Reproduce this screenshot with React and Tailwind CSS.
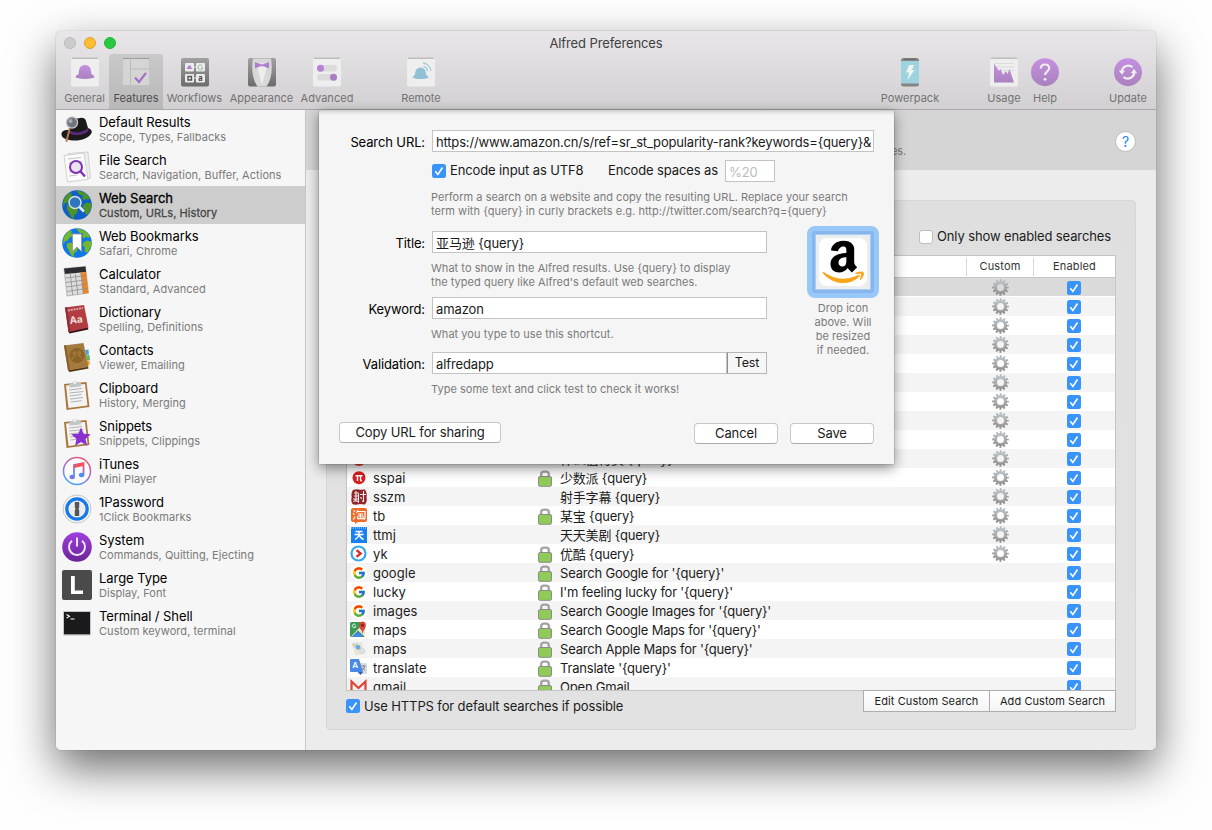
import React from "react";
import { FcGoogle } from "react-icons/fc";

const SERIES = 'font-["Inter","Noto_Sans_CJK_SC",sans-serif] tracking-[-0.12px]';

function Tile({ children }) {
  return (
    <svg width="30" height="30" viewBox="0 0 30 30">
      <rect x="1" y="1" width="28" height="28.5" rx="2" fill="#efeeef" />
      <path d="M2 1.2h26" stroke="#a9a8a9" strokeWidth="1" />
      {children}
    </svg>
  );
}

const hat = "M5.5 20.5C5.5 18.3 8 17.6 8.6 17C9 11.5 10 8 15 8S21 11.5 21.4 17C22 17.6 24.5 18.3 24.5 20.5C20 22.4 10 22.4 5.5 20.5Z";

const toolIcons = {
  General: (
    <Tile>
      <defs>
        <linearGradient id="pl" x1="0" y1="0" x2="0" y2="1">
          <stop offset="0" stopColor="#c58fe2" />
          <stop offset="1" stopColor="#a982bd" />
        </linearGradient>
      </defs>
      <path d={hat} fill="url(#pl)" />
    </Tile>
  ),
  Features: (
    <svg width="30" height="30" viewBox="0 0 30 30">
      <rect x="1.5" y="1.5" width="27" height="27" rx="2" fill="#d6d5d6" stroke="#c3c2c3" />
      <path d="M2 1.5h26" stroke="#9d9d9d" />
      <path d="M9.5 2v26M9.5 12H28" stroke="#bcbbbc" />
      <path d="M14 20.5l4 4.5l7-9" fill="none" stroke="#a374c4" strokeWidth="2.2" />
    </svg>
  ),
  Workflows: (
    <svg width="30" height="30" viewBox="0 0 30 30">
      <defs>
        <linearGradient id="wf" x1="0" y1="0" x2="0" y2="1">
          <stop offset="0" stopColor="#a1a1a1" />
          <stop offset="1" stopColor="#6c6c6c" />
        </linearGradient>
      </defs>
      <rect x="1" y="1" width="28" height="28.5" rx="2" fill="url(#wf)" />
      <path d="M13 10h4M13 21h4" stroke="#eee" />
      <rect x="5" y="6" width="9" height="8.5" rx="1" fill="#ecebec" />
      <rect x="16" y="6" width="9" height="8.5" rx="1" fill="#ecebec" />
      <rect x="5" y="17" width="9" height="8.5" rx="1" fill="#ecebec" />
      <rect x="16" y="17" width="9" height="8.5" rx="1" fill="#ecebec" />
      <path d="M6.5 12C8 11 7.500 8.500 9.500 8.500S11 11 12.500 12Z" fill="#b07fce" />
      <path d="M22.500 9a2.500 2.500 0 1 0 .4 2h-2" fill="none" stroke="#8fb9a0" />
      <path d="M8 19.500h3.500v3.500H8z" fill="none" stroke="#555" strokeWidth="1.400" />
      <text x="18.200" y="24" fontSize="7.500" fontWeight="700" fill="#444" fontFamily="Inter">a</text>
    </svg>
  ),
  Appearance: (
    <svg width="30" height="30" viewBox="0 0 30 30">
      <rect x="1" y="1" width="28" height="28.500" rx="2" fill="url(#wf)" />
      <path d="M6 1.500C4 14 6 23 10.500 29.500h9C24 23 26 14 24 1.500z" fill="#d9d8d9" />
      <path d="M10 9L15 28L20 9L15 6z" fill="#efeeef" />
      <path d="M8 5l5.500 2.300h3L22 5v6.500l-5.500-2.300h-3L8 11.500z" fill="#b07fce" />
    </svg>
  ),
  Advanced: (
    <Tile>
      <rect x="5" y="8" width="20" height="6.500" rx="3.200" fill="#dcdbdc" />
      <rect x="5" y="17" width="20" height="6.500" rx="3.200" fill="#dcdbdc" />
      <circle cx="8.500" cy="11.200" r="3.500" fill="#b783d3" />
      <circle cx="21.500" cy="20.200" r="3.500" fill="#a97cc4" />
    </Tile>
  ),
  Remote: (
    <Tile>
      <path d="M6.500 20.500C7 19 8.500 18.500 9 17.500C9.500 13 10.500 10.800 14.500 10.800S19.500 13 20 17.500C20.500 18.500 22.500 19 22.500 20.500C18 22.500 11 22.500 6.500 20.500Z" fill="#8fc0d4" />
      <path d="M17.500 9.500a5 5 0 0 1 4 4.500M17 6a9 9 0 0 1 8 8" fill="none" stroke="#a5cddd" strokeWidth="1.300" />
    </Tile>
  ),
  Powerpack: (
    <svg width="30" height="30" viewBox="0 0 30 30">
      <rect x="6" y="1" width="18" height="28.500" rx="2.500" fill="#858585" />
      <rect x="6" y="4" width="18" height="22.500" fill="#9dd3dd" />
      <path d="M9 2.200h12" stroke="#707070" strokeWidth="1.500" />
      <path d="M14 8h5l-2.200 5h2.700L12.500 23l1.700-7.500H11z" fill="#f1f3f3" />
    </svg>
  ),
  Usage: (
    <Tile>
      <path d="M5 6.500h20M5 10h20M5 13.500h20" stroke="#dddcdd" />
      <path d="M5 25.500V6.500L10 14l1.500-2L14 18l3-4 1.500 3L20.500 12 25 25.500z" fill="url(#pl)" />
    </Tile>
  ),
  Help: (
    <svg width="30" height="30" viewBox="0 0 30 30">
      <circle cx="15" cy="15.200" r="14" fill="url(#pl)" />
      <path d="M10.800 11.500c0-2.600 1.800-4 4.200-4s4.200 1.400 4.200 3.700c0 3.200-4.100 3.200-4.100 6.800" fill="none" stroke="#f0edf1" strokeWidth="2.100" />
      <circle cx="15" cy="22.300" r="1.400" fill="#f0edf1" />
    </svg>
  ),
  Update: (
    <svg width="30" height="30" viewBox="0 0 30 30">
      <circle cx="15" cy="15.200" r="14" fill="url(#pl)" />
      <path d="M8.800 15.500A6.500 6.500 0 0 1 19.500 10.200M21.200 14.500A6.500 6.500 0 0 1 10.500 20" fill="none" stroke="#f0edf1" strokeWidth="2.200" />
      <path d="M5.800 13.500L9 17.800L12.200 13.500zM17.800 16.200h6.400L21 11.800z" fill="#f0edf1" />
    </svg>
  ),
};

function Tool({ name, className }) {
  return (
    <div className={"flex shrink-0 flex-col items-center pt-[3px] text-[#737273] " + className}>
      {toolIcons[name]}
      <span className="mt-[4px] whitespace-nowrap text-[11px] leading-[14px] tracking-[0.02px]">{name}</span>
    </div>
  );
}

function Globe({ sea, land, children }) {
  return (
    <svg width="30" height="30" viewBox="0 0 30 30">
      <circle cx="15" cy="15" r="14.800" fill={sea} />
      <path d="M1.500 16C.5 11 3 5.500 7 3L10 2.500L9 5L11 6L10 8.500L7 10L6 12.500L3.500 13zM5 15.500L9 14.500L12.500 17L16 19.500L15 23L12 25.500L11.500 29C8.500 28 7.500 22 5 19.500z" fill={land} />
      <path d="M14 .8C20 .5 25 3.500 28 8.500L26 10L24.500 8.500L22 10.500L20 8L21.500 5.500L18 5zM21.500 14.500L25 12.500L29.500 13.500C29.800 18 28 22 25 25L22.500 23L23 19.500L20.500 17.500z" fill={land} />
      {children}
    </svg>
  );
}

function Clip({ children }) {
  return (
    <svg width="30" height="32" viewBox="0 0 30 32">
      <path d="M2 5L24.500 3L27.500 28L4.500 31z" fill="#a9783f" />
      <path d="M4 6.500L23 5L25.500 26.500L6.500 29z" fill="#f3f3f3" />
      <path d="M7 11l13-1.500M7.500 14l14-1.500M7.500 17l12-1.500M8 20l13-1.500M8.500 23l11-1.300" stroke="#aaa" strokeWidth=".9" />
      <path d="M7 5.500L10.500 3.500Q12.500 .5 15 3L19 4.300V7.500L7.500 8.500z" fill="#c3c6c8" />
      <circle cx="12.800" cy="3.500" r="1.300" fill="#fff" />
      {children}
    </svg>
  );
}

const sideIcons = [
  <svg width="32" height="30" viewBox="0 0 32 30">
    <path d="M.5 20C.5 17 4 15.500 8 16L9 8C10 3.500 14 3.500 17 4.500C20 3.500 24 3 25 7L27 14C30 15 31.500 17 30.500 19C28 24 20 27 12 26.500C5 26 .5 24 .5 20z" fill="#1c191c" />
    <path d="M8 16C13 20 22 19 27 14L27.500 17C22 22 13 22 7.500 19z" fill="#5d2a7d" />
    <path d="M8.500 15L5.500 27" stroke="#b87a43" strokeWidth="2" strokeLinecap="round" />
    <circle cx="11" cy="8.500" r="5.600" fill="#6f767d" stroke="#c6c8c9" strokeWidth="1.300" />
    <circle cx="9.500" cy="7" r="2" fill="#a9afb4" />
  </svg>,
  <svg width="30" height="32" viewBox="0 0 30 32">
    <path d="M6 2.500L26 1L28.500 27L9 30z" fill="#ededed" stroke="#ccc" strokeWidth=".8" />
    <path d="M2 4.500L22 2L26 28.500L5.500 31z" fill="#fbfbfb" stroke="#c8c8c8" strokeWidth=".8" />
    <path d="M6 8l13-1.500M6.500 12l14-1.500M7 25l8-1M7 21l8-1" stroke="#c6c6c6" />
    <circle cx="14" cy="16" r="6" fill="#e9e3ef" stroke="#7f2fb8" strokeWidth="2" />
    <path d="M18.500 20.500L23 25.500" stroke="#7f2fb8" strokeWidth="2.400" />
  </svg>,
  <Globe sea="#0e5fc7" land="#4c9426">
    <circle cx="13" cy="12.500" r="6" fill="#3c7fbb" fillOpacity=".7" stroke="#d8dfe6" strokeWidth="1.500" />
    <path d="M17.500 17l4.500 4.500" stroke="#e8ecef" strokeWidth="2.500" />
  </Globe>,
  <Globe sea="#1277e6" land="#74b72a">
    <path d="M10.500 6h9v17.500L15 19l-4.500 4.500z" fill="#fff" stroke="#8f9aa3" strokeWidth=".9" />
  </Globe>,
  <svg width="30" height="32" viewBox="0 0 30 32">
    <path d="M2 3.500L23.500 1.500L26.500 28L5 31z" fill="#dcdcdc" stroke="#999" strokeWidth=".6" />
    <path d="M2 3.500L23.500 1.500L24 7L3 9z" fill="#2b2d30" />
    <path d="M18.800 7.600L24.100 7L26.500 28L21.300 28.800z" fill="#f08524" />
    <path d="M3.500 13l21-2.500M4 17.500l21-2.800M4.300 22l21.200-3M4.800 26.500l21.200-3.300M8.300 9l2.400 21M13.300 8.500l2.600 21M18.800 8l2.500 21" stroke="#8e8e8e" strokeWidth=".8" />
  </svg>,
  <svg width="30" height="32" viewBox="0 0 30 32">
    <path d="M6 28L25.500 24L26.500 26.500L7.500 30.500z" fill="#3a1616" />
    <path d="M3 4.500L22 2L26.500 24.500L6.500 29z" fill="#b13c41" />
    <path d="M3 4.500L5 4L8.500 28.500L6.500 29z" fill="#8f2c31" />
    <path d="M6 7.500l15-2.500" stroke="#d9a3a3" strokeWidth="2" strokeDasharray="2 .8" />
    <text x="7.500" y="20" fontSize="10" fontWeight="700" fill="#eedede" fontFamily="Inter" transform="rotate(-7 15 17)">Aa</text>
  </svg>,
  <svg width="30" height="32" viewBox="0 0 30 32">
    <path d="M23 9l3.500-.5.5 5-3 .5z" fill="#4aa3d8" />
    <path d="M24 14.500l3.500-.5.5 5-3 .5z" fill="#5cb85c" />
    <path d="M25 20l2.500-.5.5 4-3 1z" fill="#e9a52d" />
    <path d="M6 29l20-3.500.5 2L7.500 31z" fill="#4d3415" />
    <path d="M2 4.500L21.500 2L26.500 26L6 29.500z" fill="#a57a3e" />
    <path d="M2 4.500L4 4L8 29L6 29.500z" fill="#87602c" />
    <circle cx="15" cy="14.500" r="7.500" fill="#8b6326" />
    <circle cx="12.500" cy="12.500" r="2.200" fill="#a07538" />
    <circle cx="17.300" cy="12" r="2.200" fill="#a07538" />
    <path d="M10 19q1-4 4-4.300M15.300 15q4-.8 4.700 3.500" stroke="#a07538" strokeWidth="1.500" fill="none" />
  </svg>,
  <Clip />,
  <Clip>
    <path d="M19 10.500l2.700 6.200 7 .6-5.200 4.600 1.600 6.800-6.100-3.600-6 3.600 1.500-6.800-5.200-4.600 7-.6z" fill="#8a2fd0" />
  </Clip>,
  <svg width="30" height="30" viewBox="0 0 30 30">
    <defs>
      <linearGradient id="it" x1="0.800" y1="0" x2="0.300" y2="1">
        <stop offset="0" stopColor="#f2555f" />
        <stop offset=".5" stopColor="#a06ad8" />
        <stop offset="1" stopColor="#3ea5f5" />
      </linearGradient>
    </defs>
    <circle cx="15" cy="15" r="13.500" fill="#fbfbfd" stroke="url(#it)" strokeWidth="1.500" />
    <path d="M12 20.500V9l9.500-2v11.500" fill="none" stroke="url(#it)" strokeWidth="1.800" />
    <path d="M12 9l9.500-2v3L12 12z" fill="#f2555f" />
    <ellipse cx="10.200" cy="21" rx="2.700" ry="2.200" fill="#7b78e6" />
    <ellipse cx="19.600" cy="19" rx="2.700" ry="2.200" fill="#4b8ff0" />
  </svg>,
  <svg width="30" height="30" viewBox="0 0 30 30">
    <circle cx="15" cy="15" r="14" fill="#f4f4f4" stroke="#c6c6c6" />
    <circle cx="15" cy="15" r="10.200" fill="#ececec" stroke="#1579e8" strokeWidth="3.200" />
    <path d="M12.800 8h4.400v6l-1 1 1 1v6h-4.400v-6l1-1-1-1z" fill="#53575c" />
  </svg>,
  <svg width="30" height="30" viewBox="0 0 30 30">
    <defs>
      <linearGradient id="sy" x1="0" y1="0" x2="0" y2="1">
        <stop offset="0" stopColor="#a03fe0" />
        <stop offset="1" stopColor="#6b2596" />
      </linearGradient>
    </defs>
    <circle cx="15" cy="15" r="14.800" fill="url(#sy)" />
    <path d="M10 8.800a8 8 0 1 0 10 0M15 5.500v9" fill="none" stroke="#f2eaf7" strokeWidth="1.900" />
  </svg>,
  <svg width="30" height="30" viewBox="0 0 30 30">
    <rect width="30" height="30" rx="2" fill="#4a4a4a" />
    <path d="M9 6h3.800v14.500H21V24H9z" fill="#fff" />
  </svg>,
  <svg width="30" height="30" viewBox="0 0 30 30">
    <rect x="1" y="3" width="28" height="24.500" rx="1" fill="#bfc5c9" />
    <rect x="2" y="4" width="26" height="22.300" fill="#1b1a1b" />
    <path d="M4.500 6.500l3 1.800-3 1.800M8.500 11h4" fill="none" stroke="#fff" strokeWidth="1.100" />
  </svg>,
];

const features = [
  ["Default Results", "Scope, Types, Fallbacks"],
  ["File Search", "Search, Navigation, Buffer, Actions"],
  ["Web Search", "Custom, URLs, History"],
  ["Web Bookmarks", "Safari, Chrome"],
  ["Calculator", "Standard, Advanced"],
  ["Dictionary", "Spelling, Definitions"],
  ["Contacts", "Viewer, Emailing"],
  ["Clipboard", "History, Merging"],
  ["Snippets", "Snippets, Clippings"],
  ["iTunes", "Mini Player"],
  ["1Password", "1Click Bookmarks"],
  ["System", "Commands, Quitting, Ejecting"],
  ["Large Type", "Display, Font"],
  ["Terminal / Shell", "Custom keyword, terminal"],
];

function Check({ on = true }) {
  return on ? (
    <svg className="shrink-0" width="14" height="14" viewBox="0 0 14 14">
      <rect width="14" height="14" rx="2.500" fill="#3893fb" />
      <path d="M3.300 7.300l2.600 3.200L10.500 3.500" fill="none" stroke="#fff" strokeWidth="1.600" />
    </svg>
  ) : (
    <span className="h-[14px] w-[14px] shrink-0 rounded-[3px] border border-[#bdbdbd] bg-white" />
  );
}

function Gear() {
  return (
    <svg width="17" height="17" viewBox="0 0 17 17">
      <defs>
        <linearGradient id="gr" x1="0" y1="0" x2="0" y2="1">
          <stop offset="0" stopColor="#b3bcc1" />
          <stop offset=".5" stopColor="#a0a0a0" />
          <stop offset="1" stopColor="#8c8c8c" />
        </linearGradient>
      </defs>
      <circle cx="8.500" cy="8.500" r="7.200" fill="none" stroke="url(#gr)" strokeWidth="2.200" strokeDasharray="1.900 1.870" strokeDashoffset=".95" />
      <circle cx="8.500" cy="8.500" r="5" fill="none" stroke="url(#gr)" strokeWidth="3" />
      <circle cx="8.500" cy="8.500" r="4.600" fill="none" stroke="#c9c9c9" strokeWidth=".6" />
    </svg>
  );
}

function Lock() {
  return (
    <svg width="14" height="17" viewBox="0 0 14 17">
      <path d="M3.200 8V4.200Q3.200 1.600 6 1.600H8Q10.800 1.600 10.800 4.200V8" fill="none" stroke="#a2a2a2" strokeWidth="2.300" />
      <rect x=".5" y="6.500" width="13" height="9.800" rx="1.500" fill="#90cb57" stroke="#8b8b8b" />
    </svg>
  );
}

const G = (
  <span className="flex h-[16px] w-[16px] items-center justify-center rounded-full bg-white">
    <FcGoogle size={14} />
  </span>
);

const rowIcons = {
  smzdm: (
    <svg width="16" height="16" viewBox="0 0 16 16"><circle cx="8" cy="8" r="7" fill="#dd3a32" /></svg>
  ),
  sspai: (
    <svg width="16" height="16" viewBox="0 0 16 16">
      <circle cx="8" cy="7.700" r="6.500" fill="#d91f1f" />
      <path d="M4.500 5.800h7M6.500 6v5M9.600 6v4q0 1 1.300.8" fill="none" stroke="#fff" strokeWidth="1.400" />
    </svg>
  ),
  sszm: (
    <svg width="16" height="16" viewBox="0 0 16 16">
      <path d="M2 1Q6-.5 9 .8L14 .5Q16.500 4 15.500 8Q16.500 13 14 15.500L9 15Q4 16.500 1.500 15Q-.5 12 .8 8Q-.3 4 2 1z" fill="#8e2529" />
      <path d="M3 4h4.500M5 2v11M3 7h4.500M2 10h6M7.500 4v9l-1.500-1M9 5.500h6M12.500 2v10.500L11 12M9.500 8l1.200 2M5 10l-2.500 3" fill="none" stroke="#f4e8e8" strokeWidth="1.100" />
    </svg>
  ),
  tb: (
    <svg width="16" height="16" viewBox="0 0 16 16">
      <path d="M2 0h12q2 0 2 2v10q0 2-2 2H7l-3 2v-2H2q-2 0-2-2V2Q0 0 2 0z" fill="#ee6c2a" />
      <path d="M2.500 2.500l1.500 1M2 5.500l1.500 1M2.200 11.500l2-3M7 2L5.500 5M6.500 3.500H14V10q0 1.500-1.500 1.200M7 6h5M9.500 6v4.500M6.500 8h6M6.800 8.800v1.900h5.400V8.800" fill="none" stroke="#fff" strokeWidth="1.200" />
    </svg>
  ),
  ttmj: (
    <svg width="16" height="16" viewBox="0 0 16 16">
      <rect width="16" height="16" fill="#1a80f0" />
      <path d="M0 1h16" stroke="#82c4fa" strokeWidth="1.500" strokeDasharray="1 1" />
      <path d="M4.500 4.500h7M3.500 7.500h9M8 4.500v3Q7.500 10.500 4 12.500M8 7.500q1 3.500 4.500 5" fill="none" stroke="#fff" strokeWidth="1.400" />
    </svg>
  ),
  yk: (
    <svg width="17" height="17" viewBox="0 0 17 17">
      <circle cx="8.500" cy="8.500" r="7" fill="#fff" stroke="#34a7ee" strokeWidth="2.200" />
      <path d="M6.500 5.200l4.200 3.300-4.200 3.300" fill="none" stroke="#e0272c" strokeWidth="2.300" />
    </svg>
  ),
  gmaps: (
    <svg width="17" height="17" viewBox="0 0 17 17">
      <rect y="1" width="15" height="15" rx="1.500" fill="#3c9a57" />
      <path d="M1 15.500L11 5l4 4v7L8 9.500l-6 6z" fill="#e8e4d8" />
      <path d="M2.500 16l5.500-5.500 5 5.500z" fill="#4285f4" />
      <path d="M12.500 13Q12 9 9.500 7Q8 1 12.500.5Q17 1 15.500 6.500Q13 9 12.500 13z" fill="#e04337" />
      <circle cx="12.500" cy="4.300" r="1.500" fill="#7d221c" />
      <path d="M5.500 3.800a1.800 1.800 0 1 0 .3 1.600h-1.300" fill="none" stroke="#fff" strokeWidth=".9" />
    </svg>
  ),
  amaps: (
    <svg width="17" height="17" viewBox="0 0 17 17">
      <path d="M2 3.500L12 2l2 12-9 1z" fill="#e9e6d4" />
      <path d="M2 3.500L8 2.500l1 4-6 1.500z" fill="#c5dcec" />
      <path d="M3 5.500q7-1.500 9.500 8" fill="none" stroke="#ecc95e" strokeWidth="1.500" />
      <circle cx="8" cy="7.300" r="2.400" fill="#6aa9e2" />
      <circle cx="12.300" cy="11" r="2.700" fill="#dfe2e4" stroke="#c4c9cc" strokeWidth=".5" />
    </svg>
  ),
  translate: (
    <svg width="17" height="17" viewBox="0 0 17 17">
      <path d="M6 4h10q1 0 1 1v9q0 1-1 1H8z" fill="#d9dbde" />
      <path d="M1 0h8l4 13H1q-1 0-1-1V1q0-1 1-1z" fill="#4a88e6" />
      <path d="M8 13h5l-2.500 3z" fill="#2a5cb8" />
      <text x="2.200" y="9" fontSize="8" fontWeight="600" fill="#fff" fontFamily="Inter">A</text>
      <path d="M11.500 7h4M13.500 6v1M14.800 7q-.5 3-2.600 4M12.300 8.500q.8 1.800 2.800 2.700" fill="none" stroke="#7b8087" strokeWidth=".9" />
    </svg>
  ),
  gmail: (
    <svg width="17" height="15" viewBox="0 0 17 15">
      <rect x="1" y="2" width="15" height="12" fill="#f1f1f1" />
      <path d="M1.500 15V2.500L8.500 9l7-6.500V15" fill="none" stroke="#dc4437" strokeWidth="2.200" />
    </svg>
  ),
};

const rows = [
  ...Array.from({ length: 9 }, () => ["", null, false, "", true]),
  ["", rowIcons.smzdm, false, "什么值得买 {query}", true],
  ["sspai", rowIcons.sspai, true, "少数派 {query}", true],
  ["sszm", rowIcons.sszm, false, "射手字幕 {query}", true],
  ["tb", rowIcons.tb, true, "某宝 {query}", true],
  ["ttmj", rowIcons.ttmj, false, "天天美剧 {query}", true],
  ["yk", rowIcons.yk, true, "优酷 {query}", true],
  ["google", G, true, "Search Google for '{query}'", false],
  ["lucky", G, true, "I'm feeling lucky for '{query}'", false],
  ["images", G, true, "Search Google Images for '{query}'", false],
  ["maps", rowIcons.gmaps, true, "Search Google Maps for '{query}'", false],
  ["maps", rowIcons.amaps, true, "Search Apple Maps for '{query}'", false],
  ["translate", rowIcons.translate, true, "Translate '{query}'", false],
  ["gmail", rowIcons.gmail, true, "Open Gmail", false],
];

function Row({ row, i }) {
  const [name, icon, locked, title, custom] = row;
  const bg = i === 0 ? "bg-[#dadada] border-b border-white pt-px" : i % 2 ? "bg-[#f4f4f4]" : "bg-white";
  return (
    <div className={"flex h-[19px] shrink-0 items-center text-[13px] text-[#1c1c1c] " + bg}>
      <span className="flex w-[26px] shrink-0 justify-center pr-[3px]">{icon}</span>
      <span className="w-[165px] shrink-0 pt-[2px] leading-[17px] tracking-[0.04px]">{name}</span>
      <span className="w-[22px] shrink-0 pt-px">{locked && <Lock />}</span>
      <span className="flex-1 whitespace-nowrap pt-[2px] leading-[17px] tracking-[-0.2px]">{title}</span>
      <span className="flex w-[67px] shrink-0 justify-center">{custom && <Gear />}</span>
      <span className="flex w-[81px] shrink-0 justify-center pr-[1px]"><Check /></span>
    </div>
  );
}

const fieldBox = "h-[22px] border border-[#c3c3c3] bg-white px-[3px] pt-[2px] text-[13px] leading-[19px] whitespace-nowrap text-[#1a1a1a] ";
const hint = "text-[11px] leading-[14px] tracking-[0.03px] text-[#7b7b7b] whitespace-nowrap ";
const label = "h-[22px] w-[106px] shrink-0 pr-[7px] text-right text-[13px] leading-[22px] pt-px text-black ";
const pushBtn = "flex items-center justify-center rounded-[4px] border border-[#c8c8c8] border-b-[#acacac] bg-white text-[13px] text-[#1a1a1a] ";

function Sheet() {
  return (
    <div className="absolute left-[263px] top-[79px] flex h-[354px] w-[575px] flex-col bg-[#f5f5f5] shadow-[0_4px_12px_rgba(0,0,0,0.45),0_0_1px_rgba(0,0,0,0.5),inset_0_5px_5px_-4px_rgba(0,0,0,0.25)]">
      <div className="mt-[20px] flex pl-[7px]">
        <span className={label}>Search URL:</span>
        <span className={fieldBox + "w-[442px] tracking-[-0.17px]"}>https://www.amazon.cn/s/ref=sr_st_popularity-rank?keywords={"{query}"}&amp;</span>
      </div>
      <div className="mt-[8px] flex h-[22px] items-center pl-[113px] text-[13px] text-[#1a1a1a]">
        <Check />
        <span className="ml-[4px] w-[158px] whitespace-nowrap">Encode input as UTF8</span>
        <span className="w-[117px] whitespace-nowrap">Encode spaces as</span>
        <span className="h-[22px] w-[50px] border border-[#c3c3c3] bg-white px-[3px] pt-[2px] leading-[19px] text-[#b9bdb9]">%20</span>
      </div>
      <div className={hint + "mt-[8px] pl-[112px]"}>
        Perform a search on a website and copy the resulting URL. Replace your search
        <br />
        term with {"{query}"} in curly brackets e.g. http://twitter.com/search?q={"{query}"}
      </div>
      <div className="flex h-[191px] pl-[7px]">
        <div className="flex w-[441px] flex-col pt-[13px]">
          <div className="flex">
            <span className={label}>Title:</span>
            <span className={fieldBox + "w-[335px]"}>亚马逊 {"{query}"}</span>
          </div>
          <div className={hint + "mt-[8px] pl-[105px]"}>
            What to show in the Alfred results. Use {"{query}"} to display
            <br />
            the typed query like Alfred's default web searches.
          </div>
          <div className="mt-[8px] flex">
            <span className={label}>Keyword:</span>
            <span className={fieldBox + "w-[335px]"}>amazon</span>
          </div>
          <div className={hint + "mt-[8px] pl-[105px]"}>What you type to use this shortcut.</div>
          <div className="mt-[11px] flex">
            <span className={label}>Validation:</span>
            <span className={fieldBox + "w-[295px]"}>alfredapp</span>
            <span className="flex h-[22px] w-[40px] items-center justify-center border border-l-[#8f8f8f] border-[#b5b5b5] bg-[#f6f6f6] text-[12.500px] text-[#1a1a1a]">Test</span>
          </div>
          <div className={hint + "mt-[8px] pl-[105px]"}>Type some text and click test to check it works!</div>
        </div>
        <div className="ml-[40px] flex w-[72px] flex-col items-center pt-[8px]">
          <div className="flex h-[72px] w-[72px] shrink-0 items-center justify-center rounded-[8px] border-[5px] border-[#98c8f7] bg-[#eceeee]">
            <div className="flex h-[62px] w-[62px] items-center justify-center rounded-[2px] border-[3px] border-[#86b6ec] ring-1 ring-inset ring-[#a6cdf5]">
              <svg width="48" height="48" viewBox="0 0 48 48">
                <rect width="48" height="48" rx="8" fill="#fff" />
                <g transform="translate(3.300 -0.200) scale(0.0935)">
                  <path d="M257.200 162.700c-48.700 1.800-169.500 15.500-169.500 117.500 0 109.500 138.300 114 183.500 43.200 6.500 10.200 35.400 37.500 45.300 46.800l56.800-56S341 288.900 341 261.400V114.300C341 89 316.500 32 228.700 32 140.700 32 94 87 94 136.300l73.500 6.800c16.300-49.500 54.200-49.500 54.200-49.500 40.700-.1 35.500 29.800 35.500 69.100zm0 86.800c0 80-84.200 68-84.200 17.200 0-47.200 50.500-56.700 84.200-57.800v40.600z" fill="#000" />
                  <path d="M393.200 413c-7.700 10-70 67-174.500 67S34.200 408.500 9.700 379c-6.800-7.700 1-11.300 5.500-8.300C88.500 415.200 203 488.500 387.700 401c7.500-3.700 13.300 2 5.500 12zM433 415.200c-6.500 15.800-16 26.800-21.200 31-5.500 4.500-9.500 2.700-6.500-3.800s19.300-46.500 12.700-55c-6.500-8.300-37-4.300-48-3.200-10.800 1-13 2-14-.3-2.300-5.700 21.700-15.500 37.500-17.500 15.700-1.800 41-.8 46 5.700 3.700 5.100 0 27.100-6.500 43.100z" fill="#f9a51a" stroke="#f9a51a" strokeWidth="9" />
                </g>
              </svg>
            </div>
          </div>
          <div className={hint + "mt-[3px] text-center"}>
            Drop icon<br />above. Will<br />be resized<br />if needed.
          </div>
        </div>
      </div>
      <div className="flex px-[20px] pt-[13px]">
        <span className={pushBtn + "h-[21px] w-[162px]"}>Copy URL for sharing</span>
        <span className={pushBtn + "ml-auto mt-px h-[21px] w-[84px]"}>Cancel</span>
        <span className={pushBtn + "ml-[12px] mt-px h-[21px] w-[84px]"}>Save</span>
      </div>
    </div>
  );
}

export default function App() {
  return (
    <div className={"h-[830px] w-[1212px] overflow-hidden bg-[#fefefe] pl-[56px] pt-[31px] " + SERIES}>
      <div className="relative flex h-[719px] w-[1100px] flex-col rounded-[5px] shadow-[0_18px_45px_rgba(0,0,0,0.58),0_0_1px_rgba(0,0,0,0.5)]">
        <header className="h-[79px] shrink-0 rounded-t-[5px] border-b border-[#a9a7a9] bg-linear-to-b from-[#e8e6e8] to-[#d2d0d2]">
          <div className="flex h-[23px] items-center">
            <span className="ml-[8px] h-[12px] w-[12px] rounded-full border border-[#bcbbbc] bg-[#cdcccd]" />
            <span className="ml-[8px] h-[12px] w-[12px] rounded-full border border-[#e0a033] bg-[#fdbd2f]" />
            <span className="ml-[8px] h-[12px] w-[12px] rounded-full border border-[#25b53c] bg-[#28c840]" />
            <span className="mr-[60px] flex-1 text-center text-[13px] leading-[16px] text-[#3f3f3f]">Alfred Preferences</span>
          </div>
          <div className="flex h-[55px] pl-[4px]">
            <Tool name="General" className="w-[49px]" />
            <Tool name="Features" className="w-[54px] rounded-t-[3px] bg-linear-to-b from-[#cac9ca] to-[#b9b8b9] text-[#4c4c4c]!" />
            <Tool name="Workflows" className="w-[63px]" />
            <Tool name="Appearance" className="w-[71px]" />
            <Tool name="Advanced" className="w-[60px]" />
            <Tool name="Remote" className="ml-[44px] w-[40px]" />
            <Tool name="Powerpack" className="ml-auto w-[66px]" />
            <Tool name="Usage" className="ml-[41px] w-[40px]" />
            <Tool name="Help" className="ml-[5px] w-[32px]" />
            <Tool name="Update" className="ml-[43px] mr-[4px] w-[48px]" />
          </div>
        </header>

        <div className="flex min-h-0 flex-1">
          <nav className="w-[250px] shrink-0 rounded-bl-[5px] border-r border-[#c6c6c6] bg-[#f6f6f6]">
            {features.map(([title, sub], i) => (
              <div key={title} className={"flex h-[38px] items-center " + (i === 2 ? "bg-[#cdcdcd]" : "")}>
                <span className="flex w-[43px] shrink-0 items-center justify-center pr-px">{sideIcons[i]}</span>
                <span className={"flex flex-col whitespace-nowrap " + (i === 2 ? "[-webkit-text-stroke:0.3px]" : "")}>
                  <span className="text-[13px] leading-[16px] tracking-[-0.06px] text-black">{title}</span>
                  <span className={"text-[11px] leading-[15px] tracking-[0.05px] " + (i === 2 ? "text-[#484848]" : "text-[#7a7a7a]")}>{sub}</span>
                </span>
              </div>
            ))}
          </nav>

          <main className="flex min-w-0 flex-1 flex-col rounded-br-[5px] bg-[#ececec]">
            <div className="flex h-[60px] shrink-0 items-start justify-end bg-[#d5d5d5] pr-[20px]">
              <span className="mr-[209px] mt-[34px] text-[11px] leading-[14px] text-[#7a7a7a]">es.</span>
              <span className="mt-[21px] flex h-[21px] w-[21px] items-center justify-center rounded-full border border-[#bcbcbc] bg-white text-[14px] text-[#1a82fb]">?</span>
            </div>
            <section className="mx-[20px] mt-[30px] flex h-[530px] flex-col rounded-[4px] border border-[#d6d6d6] bg-linear-to-b from-[#dfdfdf] to-[#e2e2e2] px-[19px]">
              <div className="flex h-[54px] items-center justify-end pr-[5px] pt-[17px] text-[13px] text-[#1c1c1c]">
                <Check on={false} />
                <span className="ml-[4px]">Only show enabled searches</span>
              </div>
              <div className="flex h-[436px] w-[770px] flex-col overflow-hidden border border-[#c4c4c4] bg-white">
                <div className="flex h-[22px] shrink-0 items-center justify-end border-b border-[#c8c8c8] text-[11px] tracking-[0.16px] text-[#333]">
                  <span className="flex h-[18px] w-[67px] items-center justify-center border-l border-[#d8d8d8]">Custom</span>
                  <span className="flex h-[18px] w-[82px] items-center justify-center border-l border-[#d8d8d8]">Enabled</span>
                </div>
                {rows.map((r, i) => (
                  <Row key={i} row={r} i={i} />
                ))}
              </div>
              <div className="flex text-[#1c1c1c]">
                <span className="mt-[8px] flex h-[14px] flex-1 items-center text-[13px]">
                  <Check />
                  <span className="ml-[4px] pt-px">Use HTTPS for default searches if possible</span>
                </span>
                <span className="-mt-px flex h-[22px] w-[127px] items-center justify-center border border-[#adadad] bg-linear-to-b from-white to-[#f4f4f4] text-[11px] tracking-[0.08px]">Edit Custom Search</span>
                <span className="-ml-px -mt-px flex h-[22px] w-[127px] items-center justify-center border border-[#adadad] bg-linear-to-b from-white to-[#f4f4f4] text-[11px] tracking-[0.08px]">Add Custom Search</span>
              </div>
            </section>
          </main>
        </div>
        <Sheet />
      </div>
    </div>
  );
}
